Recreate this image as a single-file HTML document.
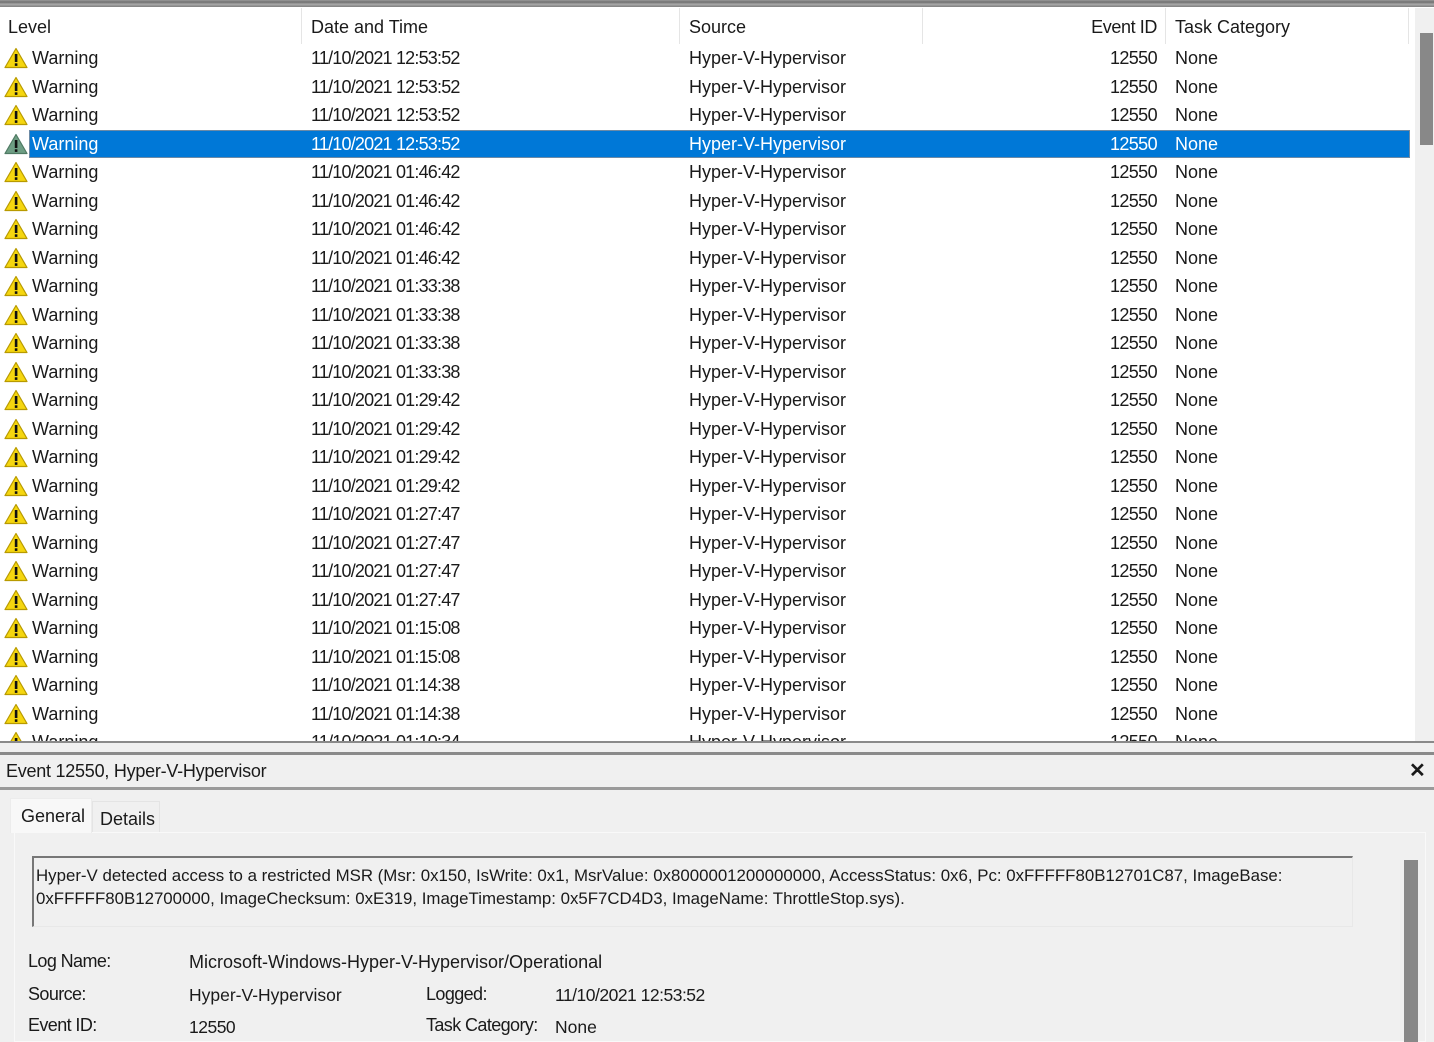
<!DOCTYPE html>
<html><head><meta charset="utf-8"><style>
*{margin:0;padding:0;box-sizing:border-box}
body{width:1434px;height:1042px;overflow:hidden;background:#f0f0f0;font-family:"Liberation Sans",sans-serif;font-size:18px;color:#1a1a1a;position:relative}
.abs{position:absolute;white-space:nowrap}
#list{position:absolute;left:0;top:0;width:1434px;height:742px;background:#fff;overflow:hidden}
.topbar{position:absolute;left:0;top:0;width:1434px;height:7px;background:linear-gradient(#9a9a9a,#707070 30%,#a8a8a8 60%,#808080)}
.hdr{position:absolute;top:8px;height:36px;line-height:38px}
.sep{position:absolute;top:8px;width:1px;height:36px;background:#e5e5e5}
.row{position:absolute;left:0;width:1412px;height:28.5px;line-height:29.5px}
.row span{position:absolute}
.c1{left:32px}.c2{left:311px;letter-spacing:-0.8px}.c3{left:689px}.c4{left:1080px;width:77px;text-align:right;letter-spacing:-0.6px}.c5{left:1175px}
.ic{position:absolute;left:4px;top:3px;width:24px;height:22px}
.sel .bg{position:absolute;left:29px;top:0;width:1381px;height:28px;background:#0078d7;border:1px solid #6c8aa6}
.sel span{color:#fff}
.lb{font-size:18px;letter-spacing:-0.6px}
</style></head><body>
<div id="list">
<div class="topbar"></div>
<div class="hdr abs" style="left:8px">Level</div>
<div class="hdr abs" style="left:311px">Date and Time</div>
<div class="hdr abs" style="left:689px">Source</div>
<div class="hdr abs" style="left:1080px;width:77px;text-align:right;letter-spacing:-0.4px">Event ID</div>
<div class="hdr abs" style="left:1175px">Task Category</div>
<div class="sep" style="left:301px"></div><div class="sep" style="left:679px"></div><div class="sep" style="left:922px"></div><div class="sep" style="left:1165px"></div><div class="sep" style="left:1408px"></div>
<div style="position:absolute;left:1415px;top:8px;width:19px;height:734px;background:#f0f0f0"></div>
<div style="position:absolute;left:1420px;top:33px;width:13px;height:112px;background:#888"></div>
<svg width="0" height="0" style="position:absolute"><defs>
<symbol id="w" viewBox="0 0 24 22"><path d="M12 1.5 L23 20.5 H1 Z" fill="#f5d60f" stroke="#b89a00" stroke-width="1.2" stroke-linejoin="round"/><rect x="10.8" y="7" width="2.6" height="8" fill="#111"/><rect x="10.8" y="16.3" width="2.6" height="2.6" fill="#111"/></symbol>
<symbol id="g" viewBox="0 0 24 22"><path d="M12 1.5 L23 20.5 H1 Z" fill="#6e9e84" stroke="#4f7a63" stroke-width="1.2" stroke-linejoin="round"/><rect x="10.8" y="7" width="2.6" height="8" fill="#111"/><rect x="10.8" y="16.3" width="2.6" height="2.6" fill="#111"/></symbol>
</defs></svg>
<div class="row" style="top:44px"><svg class="ic"><use href="#w"/></svg><span class="c1">Warning</span><span class="c2">11/10/2021 12:53:52</span><span class="c3">Hyper-V-Hypervisor</span><span class="c4">12550</span><span class="c5">None</span></div>
<div class="row" style="top:72.5px"><svg class="ic"><use href="#w"/></svg><span class="c1">Warning</span><span class="c2">11/10/2021 12:53:52</span><span class="c3">Hyper-V-Hypervisor</span><span class="c4">12550</span><span class="c5">None</span></div>
<div class="row" style="top:101px"><svg class="ic"><use href="#w"/></svg><span class="c1">Warning</span><span class="c2">11/10/2021 12:53:52</span><span class="c3">Hyper-V-Hypervisor</span><span class="c4">12550</span><span class="c5">None</span></div>
<div class="row sel" style="top:129.5px"><div class="bg"></div><svg class="ic"><use href="#g"/></svg><span class="c1">Warning</span><span class="c2">11/10/2021 12:53:52</span><span class="c3">Hyper-V-Hypervisor</span><span class="c4">12550</span><span class="c5">None</span></div>
<div class="row" style="top:158px"><svg class="ic"><use href="#w"/></svg><span class="c1">Warning</span><span class="c2">11/10/2021 01:46:42</span><span class="c3">Hyper-V-Hypervisor</span><span class="c4">12550</span><span class="c5">None</span></div>
<div class="row" style="top:186.5px"><svg class="ic"><use href="#w"/></svg><span class="c1">Warning</span><span class="c2">11/10/2021 01:46:42</span><span class="c3">Hyper-V-Hypervisor</span><span class="c4">12550</span><span class="c5">None</span></div>
<div class="row" style="top:215px"><svg class="ic"><use href="#w"/></svg><span class="c1">Warning</span><span class="c2">11/10/2021 01:46:42</span><span class="c3">Hyper-V-Hypervisor</span><span class="c4">12550</span><span class="c5">None</span></div>
<div class="row" style="top:243.5px"><svg class="ic"><use href="#w"/></svg><span class="c1">Warning</span><span class="c2">11/10/2021 01:46:42</span><span class="c3">Hyper-V-Hypervisor</span><span class="c4">12550</span><span class="c5">None</span></div>
<div class="row" style="top:272px"><svg class="ic"><use href="#w"/></svg><span class="c1">Warning</span><span class="c2">11/10/2021 01:33:38</span><span class="c3">Hyper-V-Hypervisor</span><span class="c4">12550</span><span class="c5">None</span></div>
<div class="row" style="top:300.5px"><svg class="ic"><use href="#w"/></svg><span class="c1">Warning</span><span class="c2">11/10/2021 01:33:38</span><span class="c3">Hyper-V-Hypervisor</span><span class="c4">12550</span><span class="c5">None</span></div>
<div class="row" style="top:329px"><svg class="ic"><use href="#w"/></svg><span class="c1">Warning</span><span class="c2">11/10/2021 01:33:38</span><span class="c3">Hyper-V-Hypervisor</span><span class="c4">12550</span><span class="c5">None</span></div>
<div class="row" style="top:357.5px"><svg class="ic"><use href="#w"/></svg><span class="c1">Warning</span><span class="c2">11/10/2021 01:33:38</span><span class="c3">Hyper-V-Hypervisor</span><span class="c4">12550</span><span class="c5">None</span></div>
<div class="row" style="top:386px"><svg class="ic"><use href="#w"/></svg><span class="c1">Warning</span><span class="c2">11/10/2021 01:29:42</span><span class="c3">Hyper-V-Hypervisor</span><span class="c4">12550</span><span class="c5">None</span></div>
<div class="row" style="top:414.5px"><svg class="ic"><use href="#w"/></svg><span class="c1">Warning</span><span class="c2">11/10/2021 01:29:42</span><span class="c3">Hyper-V-Hypervisor</span><span class="c4">12550</span><span class="c5">None</span></div>
<div class="row" style="top:443px"><svg class="ic"><use href="#w"/></svg><span class="c1">Warning</span><span class="c2">11/10/2021 01:29:42</span><span class="c3">Hyper-V-Hypervisor</span><span class="c4">12550</span><span class="c5">None</span></div>
<div class="row" style="top:471.5px"><svg class="ic"><use href="#w"/></svg><span class="c1">Warning</span><span class="c2">11/10/2021 01:29:42</span><span class="c3">Hyper-V-Hypervisor</span><span class="c4">12550</span><span class="c5">None</span></div>
<div class="row" style="top:500px"><svg class="ic"><use href="#w"/></svg><span class="c1">Warning</span><span class="c2">11/10/2021 01:27:47</span><span class="c3">Hyper-V-Hypervisor</span><span class="c4">12550</span><span class="c5">None</span></div>
<div class="row" style="top:528.5px"><svg class="ic"><use href="#w"/></svg><span class="c1">Warning</span><span class="c2">11/10/2021 01:27:47</span><span class="c3">Hyper-V-Hypervisor</span><span class="c4">12550</span><span class="c5">None</span></div>
<div class="row" style="top:557px"><svg class="ic"><use href="#w"/></svg><span class="c1">Warning</span><span class="c2">11/10/2021 01:27:47</span><span class="c3">Hyper-V-Hypervisor</span><span class="c4">12550</span><span class="c5">None</span></div>
<div class="row" style="top:585.5px"><svg class="ic"><use href="#w"/></svg><span class="c1">Warning</span><span class="c2">11/10/2021 01:27:47</span><span class="c3">Hyper-V-Hypervisor</span><span class="c4">12550</span><span class="c5">None</span></div>
<div class="row" style="top:614px"><svg class="ic"><use href="#w"/></svg><span class="c1">Warning</span><span class="c2">11/10/2021 01:15:08</span><span class="c3">Hyper-V-Hypervisor</span><span class="c4">12550</span><span class="c5">None</span></div>
<div class="row" style="top:642.5px"><svg class="ic"><use href="#w"/></svg><span class="c1">Warning</span><span class="c2">11/10/2021 01:15:08</span><span class="c3">Hyper-V-Hypervisor</span><span class="c4">12550</span><span class="c5">None</span></div>
<div class="row" style="top:671px"><svg class="ic"><use href="#w"/></svg><span class="c1">Warning</span><span class="c2">11/10/2021 01:14:38</span><span class="c3">Hyper-V-Hypervisor</span><span class="c4">12550</span><span class="c5">None</span></div>
<div class="row" style="top:699.5px"><svg class="ic"><use href="#w"/></svg><span class="c1">Warning</span><span class="c2">11/10/2021 01:14:38</span><span class="c3">Hyper-V-Hypervisor</span><span class="c4">12550</span><span class="c5">None</span></div>
<div class="row" style="top:728px"><svg class="ic"><use href="#w"/></svg><span class="c1">Warning</span><span class="c2">11/10/2021 01:10:34</span><span class="c3">Hyper-V-Hypervisor</span><span class="c4">12550</span><span class="c5">None</span></div>
</div>
<div style="position:absolute;left:0;top:741px;width:1434px;height:2px;background:#8a8a8a"></div>
<div style="position:absolute;left:0;top:752px;width:1434px;height:3px;background:#8a8a8a"></div>
<div class="abs" style="left:6px;top:755px;line-height:32px;letter-spacing:-0.25px">Event 12550, Hyper-V-Hypervisor</div>
<div class="abs" style="left:1409px;top:755px;line-height:32px;font-weight:bold;font-size:20px">✕</div>
<div style="position:absolute;left:0;top:787px;width:1434px;height:3px;background:#9a9a9a"></div>
<div style="position:absolute;left:14px;top:832px;width:1412px;height:210px;background:#f0f0f0;border:1px solid #f9f9f9"></div>
<div class="abs" style="left:10px;top:798px;width:82px;height:35px;background:#f8f8f8;border:1px solid #ececec;border-bottom:none;line-height:34px;padding-left:10px">General</div>
<div class="abs" style="left:92px;top:801px;width:68px;height:31px;border:1px solid #e4e4e4;border-bottom:none;line-height:34px;padding-left:7px">Details</div>
<div style="position:absolute;left:32px;top:856px;width:1321px;height:71px;border:1px solid #e8e8e8;border-top:2px solid #777;border-left:2px solid #777;background:#f0f0f0"></div>
<div class="abs" style="left:36px;top:864px;line-height:23px;font-size:16.85px">Hyper-V detected access to a restricted MSR (Msr: 0x150, IsWrite: 0x1, MsrValue: 0x8000001200000000, AccessStatus: 0x6, Pc: 0xFFFFF80B12701C87, ImageBase:<br>0xFFFFF80B12700000, ImageChecksum: 0xE319, ImageTimestamp: 0x5F7CD4D3, ImageName: ThrottleStop.sys).</div>
<div style="position:absolute;left:1404px;top:860px;width:14px;height:182px;background:#888"></div>
<div class="abs lb" style="left:28px;top:951px">Log Name:</div>
<div class="abs" style="left:189px;top:952px;font-size:18px">Microsoft-Windows-Hyper-V-Hypervisor/Operational</div>
<div class="abs lb" style="left:28px;top:984px">Source:</div>
<div class="abs" style="left:189px;top:985px;font-size:17.5px">Hyper-V-Hypervisor</div>
<div class="abs lb" style="left:426px;top:984px">Logged:</div>
<div class="abs" style="left:555px;top:985px;font-size:17.5px;letter-spacing:-0.5px">11/10/2021 12:53:52</div>
<div class="abs lb" style="left:28px;top:1015px">Event ID:</div>
<div class="abs" style="left:189px;top:1017px;font-size:17.5px;letter-spacing:-0.5px">12550</div>
<div class="abs lb" style="left:426px;top:1015px">Task Category:</div>
<div class="abs" style="left:555px;top:1017px;font-size:17.5px">None</div>
</body></html>
